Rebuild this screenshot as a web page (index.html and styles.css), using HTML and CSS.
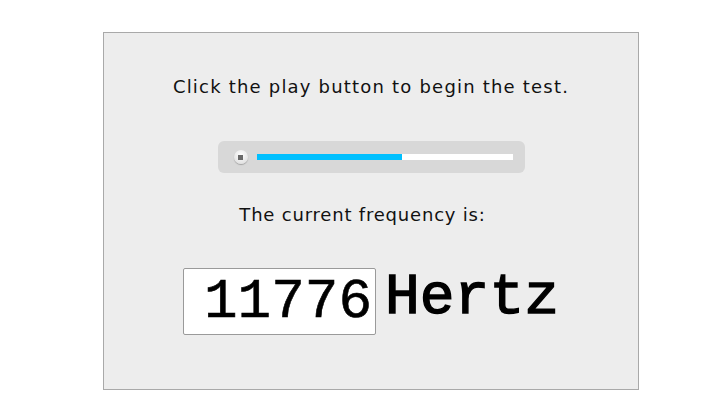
FILE: index.html
```html
<!DOCTYPE html>
<html lang="en">
<head>
    <meta charset="UTF-8">
    <title>Hearing Test</title>
    <link rel="stylesheet" href="styles.css">
</head>
<body>
    <div class="panel">
        <p class="intro">Click the play button to begin the test.</p>
        <div class="player">
            <span class="play-btn"><span class="stop"></span></span>
            <div class="track">
                <div class="fill" style="width: 57%"></div>
            </div>
        </div>
        <p class="label">The current frequency is:</p>
        <div class="reading">
            <input type="text" class="freq" value="11776" readonly>
            <span class="unit">Hertz</span>
        </div>
    </div>
</body>
</html>
```

FILE: styles.css
```css
body {
    margin: 0;
    background: #ffffff;
    font-family: "DejaVu Sans", Verdana, sans-serif;
}
.panel {
    box-sizing: border-box;
    width: 536px;
    height: 358px;
    margin: 32px 0 0 103px;
    background: #ededed;
    border: 1px solid #a9a9a9;
    display: flex;
    flex-direction: column;
    align-items: center;
    padding-top: 43px;
}
.intro {
    margin: 0;
    font-size: 18px;
    letter-spacing: 1.2px;
    line-height: 22px;
    color: #111;
}
.player {
    margin-top: 43px;
    width: 307px;
    height: 32px;
    box-sizing: border-box;
    background: #d8d8d8;
    border-radius: 6px;
    display: flex;
    align-items: center;
    padding: 0 12px 0 16px;
    gap: 9px;
}
.play-btn {
    width: 14px;
    height: 14px;
    border-radius: 50%;
    background: radial-gradient(circle at 50% 35%, #ffffff, #e4e4e4 70%, #cfcfcf);
    box-shadow: 0 1px 1px rgba(0, 0, 0, 0.25);
    display: flex;
    align-items: center;
    justify-content: center;
    flex-shrink: 0;
}
.stop {
    width: 5px;
    height: 5px;
    background: #6a6a6a;
}
.track {
    flex: 1;
    height: 6px;
    background: #ffffff;
}
.fill {
    height: 100%;
    background: #00c0ff;
}
.label {
    margin: 31px 0 0 -17px;
    font-size: 18px;
    letter-spacing: 0.8px;
    line-height: 22px;
    color: #111;
}
.reading {
    margin-top: 42px;
    display: flex;
    align-items: center;
    gap: 9px;
}
.freq {
    box-sizing: border-box;
    width: 193px;
    height: 67px;
    border: 1px solid #9a9a9a;
    border-radius: 2px;
    background: #fff;
    padding: 0 3px 0 0;
    text-align: right;
    font-family: "Liberation Mono", "Courier New", monospace;
    font-size: 56px;
    -webkit-text-stroke: 0.6px #000;
    color: #000;
}
.unit {
    font-family: "Liberation Mono", "Courier New", monospace;
    font-size: 58px;
    -webkit-text-stroke: 1.4px #000;
    color: #000;
    margin-top: -8px;
}
```
